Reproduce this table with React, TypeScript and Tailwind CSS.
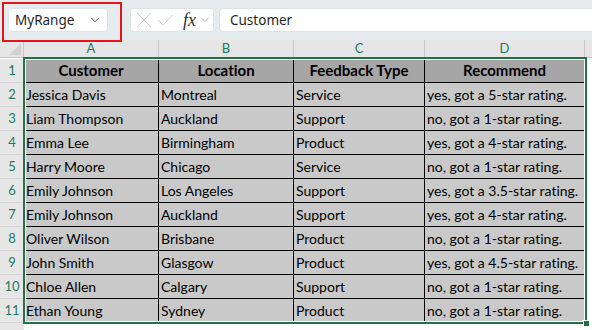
import { ChevronDown, X, Check } from 'lucide-react'

const cols = [
  { letter: 'A', w: 'w-[135px]' },
  { letter: 'B', w: 'w-[135px]' },
  { letter: 'C', w: 'w-[131px]' },
  { letter: 'D', w: 'w-[160px]' },
]

const headers = ['Customer', 'Location', 'Feedback Type', 'Recommend']

const rows = [
  ['Jessica Davis', 'Montreal', 'Service', 'yes, got a 5-star rating.'],
  ['Liam Thompson', 'Auckland', 'Support', 'no, got a 1-star rating.'],
  ['Emma Lee', 'Birmingham', 'Product', 'yes, got a 4-star rating.'],
  ['Harry Moore', 'Chicago', 'Service', 'no, got a 1-star rating.'],
  ['Emily Johnson', 'Los Angeles', 'Support', 'yes, got a 3.5-star rating.'],
  ['Emily Johnson', 'Auckland', 'Support', 'yes, got a 4-star rating.'],
  ['Oliver Wilson', 'Brisbane', 'Product', 'no, got a 1-star rating.'],
  ['John Smith', 'Glasgow', 'Product', 'yes, got a 4.5-star rating.'],
  ['Chloe Allen', 'Calgary', 'Support', 'no, got a 1-star rating.'],
  ['Ethan Young', 'Sydney', 'Product', 'no, got a 1-star rating.'],
]

export default function App() {
  return (
    <div className="h-[330px] w-[592px] overflow-hidden bg-white font-['Lato',sans-serif] text-black [font-variant-ligatures:none]">
      {/* formula bar */}
      <div className="relative z-10 flex h-[40px] items-center bg-[#e6ecee] pl-[8px] font-['Noto_Sans',sans-serif]">
        <div className="relative flex h-[24px] w-[100px] items-center justify-between rounded-[4px] border border-[#dfe3e5] bg-white pl-[6px] pr-[5px] text-[13.5px] text-[#1f1f1f]">
          MyRange
          <ChevronDown className="h-[14px] w-[14px] text-[#444]" strokeWidth={1.6} />
          <div className="absolute -left-[7px] -top-[7px] h-[40px] w-[120px] border-2 border-[#e8141b]" />
        </div>
        <div className="ml-[22px] flex h-[24px] w-[84px] items-center rounded-[4px] border border-[#dfe3e5] bg-white">
          <X className="h-[26px] w-[26px] text-[#bdbdbd]" strokeWidth={0.75} />
          <Check className="-ml-[2px] h-[21px] w-[21px] text-[#bdbdbd]" strokeWidth={0.95} />
          <span className="ml-[7px] font-['Liberation_Serif',serif] text-[18px] italic leading-none text-[#333]">fx</span>
          <ChevronDown className="ml-[3px] h-[12px] w-[12px] text-[#999]" strokeWidth={1.5} />
        </div>
        <div className="ml-[5px] flex h-[24px] flex-1 items-center rounded-l-[4px] border border-r-0 border-[#dfe3e5] bg-white pl-[10px] text-[13.5px] text-[#1f1f1f]">
          Customer
        </div>
      </div>

      {/* sheet */}
      <div className="relative">
        <div className="flex h-[18px] border-b border-[#c6c6c6] bg-[#e6e6e6] text-[13px] text-[#1d7a5f]">
          <div className="relative w-[24px] border-r border-[#c6c6c6]">
            <div className="absolute bottom-[2px] right-[2px] h-0 w-0 border-b-0 border-l-[12px] border-r-[12px] border-t-[12px] border-l-transparent border-r-[#d2d2d2] border-t-transparent" />
          </div>
          {cols.map((c) => (
            <div key={c.letter} className={`${c.w} flex items-center justify-center border-r border-[#c6c6c6]`}>
              {c.letter}
            </div>
          ))}
          <div className="flex-1" />
        </div>

        <div className="flex h-[25px] pt-[1px]">
          <div className="flex w-[24px] items-center justify-center border-b border-[#d4d4d4] bg-[#e6e6e6] text-[13px] text-[#1d7a5f]">1</div>
          {headers.map((h, i) => (
            <div key={h} className={`${cols[i].w} flex items-center justify-center border-b border-r border-black bg-[#a6a6a6] text-[15px] font-bold`}>
              {h}
            </div>
          ))}
        </div>

        {rows.map((r, ri) => (
          <div key={ri} className="flex h-[24px]">
            <div className="flex w-[24px] items-center justify-center border-b border-[#d4d4d4] bg-[#e6e6e6] text-[13px] text-[#1d7a5f]">{ri + 2}</div>
            {r.map((v, ci) => (
              <div key={ci} className={`${cols[ci].w} flex items-center border-b border-r border-black bg-[#c9c9c9] pl-[2px] text-[14px]`}>
                {v}
              </div>
            ))}
          </div>
        ))}
        <div className="flex h-[10px]">
          <div className="w-[24px] bg-[#e6e6e6]" />
        </div>

        {/* selection */}
        <div className="pointer-events-none absolute left-[23px] top-[17px] h-[267px] w-[564px] border-2 border-[#217346] shadow-[inset_0_0_0_1px_white]">
          <div className="absolute -bottom-[5px] -right-[5px] h-[7px] w-[7px] border border-white bg-[#217346]" />
        </div>
      </div>
    </div>
  )
}
